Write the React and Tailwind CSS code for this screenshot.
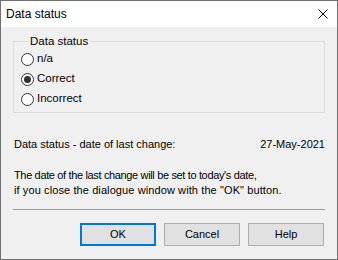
export default function App() {
  const options = ["n/a", "Correct", "Incorrect"];
  const selected = "Correct";

  return (
    <div
      className="flex h-[260px] w-[338px] flex-col border border-[#707070] bg-[#f0f0f0] text-[11px] text-black"
      style={{ fontFamily: '"Liberation Sans", Arial, sans-serif' }}
    >
      {/* title bar */}
      <div className="flex h-[26px] shrink-0 items-center justify-between bg-white pl-[5px] pr-[9px] text-[12px]">
        <span>Data status</span>
        <svg width="10" height="10" viewBox="0 0 10 10" className="mt-[-1px]">
          <path d="M0.5 0.5 L9.5 9.5 M9.5 0.5 L0.5 9.5" stroke="#000" strokeWidth="1" />
        </svg>
      </div>

      <div className="flex flex-col px-[12px]">
        <fieldset className="mt-[6px] h-[80px] border border-[#dcdcdc] pl-[7px] pr-[8px]">
          <legend className="ml-[8px] px-[1px] text-[11.5px] leading-[16px]">Data status</legend>
          {options.map((o) => (
            <label key={o} className="flex h-[20px] items-center gap-[3px] text-[11.5px]">
              <span className="flex h-[13px] w-[13px] items-center justify-center rounded-full border border-[#333] bg-white">
                {o === selected && <span className="h-[7px] w-[7px] rounded-full bg-[#333]" />}
              </span>
              <span>{o}</span>
            </label>
          ))}
        </fieldset>

        <div className="mt-[23px] flex h-[16px] items-center justify-between pl-[1px]">
          <span>Data status - date of last change:</span>
          <span>27-May-2021</span>
        </div>

        <p className="mt-[16px] pl-[1px] leading-[15px]">
          <span className="block tracking-[-0.35px]">The date of the last change will be set to today's date,</span>
          <span className="block tracking-[0.1px]">if you close the dialogue window with the "OK" button.</span>
        </p>

        <div className="mt-[11px] h-px bg-[#a0a0a0]" />

        <div className="mr-[1px] mt-[13px] flex justify-end gap-[8px]">
          <button className="h-[23px] w-[76px] border-2 border-[#0078d7] bg-[#e1e1e1]">OK</button>
          <button className="h-[23px] w-[76px] border border-[#adadad] bg-[#e1e1e1]">Cancel</button>
          <button className="h-[23px] w-[76px] border border-[#adadad] bg-[#e1e1e1]">Help</button>
        </div>
      </div>
    </div>
  );
}
